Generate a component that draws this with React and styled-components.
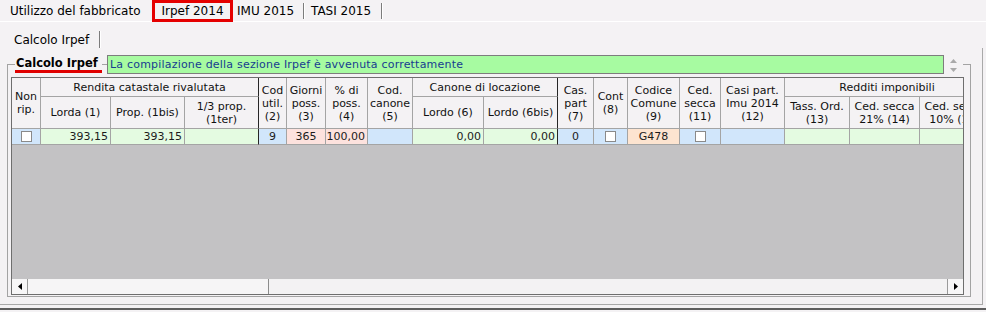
import React from 'react';
import styled, { createGlobalStyle } from 'styled-components';

const GlobalStyle = createGlobalStyle`
  html, body {
    margin: 0;
    background: #f4f2f4;
    font-family: "DejaVu Sans", Verdana, sans-serif;
  }
`;

const BLUE = '#d1e6fb';
const GREEN = '#e4fbe1';
const PINK = '#fde2de';
const PEACH = '#fde4d0';

const heads = [
  { c: '1', r: '1 / 3', t: ['Non', 'rip.'] },
  { c: '2 / 5', r: '1', t: ['Rendita catastale rivalutata'], strong: true },
  { c: '2', r: '2', t: ['Lorda (1)'] },
  { c: '3', r: '2', t: ['Prop. (1bis)'] },
  { c: '4', r: '2', t: ['1/3 prop.', '(1ter)'], strong: true },
  { c: '5', r: '1 / 3', t: ['Cod', 'util.', '(2)'] },
  { c: '6', r: '1 / 3', t: ['Giorni', 'poss.', '(3)'] },
  { c: '7', r: '1 / 3', t: ['% di', 'poss.', '(4)'] },
  { c: '8', r: '1 / 3', t: ['Cod.', 'canone', '(5)'] },
  { c: '9 / 11', r: '1', t: ['Canone di locazione'], strong: true },
  { c: '9', r: '2', t: ['Lordo (6)'] },
  { c: '10', r: '2', t: ['Lordo (6bis)'], strong: true },
  { c: '11', r: '1 / 3', t: ['Cas.', 'part', '(7)'] },
  { c: '12', r: '1 / 3', t: ['Cont', '(8)'] },
  { c: '13', r: '1 / 3', t: ['Codice', 'Comune', '(9)'] },
  { c: '14', r: '1 / 3', t: ['Ced.', 'secca', '(11)'] },
  { c: '15', r: '1 / 3', t: ['Casi part.', 'Imu 2014', '(12)'] },
  { c: '16 / 19', r: '1', t: ['Redditi imponibili'] },
  { c: '16', r: '2', t: ['Tass. Ord.', '(13)'] },
  { c: '17', r: '2', t: ['Ced. secca', '21% (14)'] },
  { c: '18', r: '2', t: ['Ced. secca', '10% (15)'] },
];

const row = [
  { bg: BLUE, chk: true },
  { bg: GREEN, v: '393,15', a: 'right' },
  { bg: GREEN, v: '393,15', a: 'right' },
  { bg: GREEN, strong: true },
  { bg: BLUE, v: '9' },
  { bg: PINK, v: '365' },
  { bg: PINK, v: '100,00', a: 'right' },
  { bg: BLUE },
  { bg: GREEN, v: '0,00', a: 'right' },
  { bg: GREEN, v: '0,00', a: 'right', strong: true },
  { bg: BLUE, v: '0' },
  { bg: BLUE, chk: true },
  { bg: PEACH, v: 'G478' },
  { bg: BLUE, chk: true },
  { bg: BLUE },
  { bg: GREEN },
  { bg: GREEN },
  { bg: GREEN },
];

function App() {
  return (
    <Page>
      <GlobalStyle />
      <TopTabs>
        <Tab $w={152} $pl={10}>Utilizzo del fabbricato</Tab>
        <ActiveTab>Irpef 2014</ActiveTab>
        <Tab $w={70} $pl={4}>IMU 2015</Tab>
        <Sep />
        <Tab $w={77} $pl={7}>TASI 2015</Tab>
        <Sep />
      </TopTabs>

      <SubTabs>
        <Tab $w={99} $pl={14}>Calcolo Irpef</Tab>
        <Sep $h={17} />
      </SubTabs>

      <Panel>
        <GroupBox>
          <LegendRow>
            <Title>Calcolo Irpef</Title>
            <Message>La compilazione della sezione Irpef è avvenuta correttamente</Message>
            <Spinner>
              <svg width="9" height="18" viewBox="0 0 9 18">
                <polygon points="1,7 4.5,3 8,7" fill="#a9a9a9" />
                <polygon points="1,12 8,12 4.5,16" fill="#a9a9a9" />
              </svg>
            </Spinner>
          </LegendRow>

          <Grid>
            <Table>
              {heads.map((h, i) => (
                <HeadCell key={i} $c={h.c} $r={h.r} $strong={h.strong}>
                  {h.t.map((line, j) => (
                    <span key={j}>{line}</span>
                  ))}
                </HeadCell>
              ))}
              {row.map((d, i) => (
                <DataCell key={'d' + i} $bg={d.bg} $align={d.a} $strong={d.strong}>
                  {d.chk ? <Check /> : d.v}
                </DataCell>
              ))}
            </Table>
            <Empty />
            <HScroll>
              <ScrollBtn $side="left">
                <svg width="4" height="7" viewBox="0 0 4 7">
                  <polygon points="4,0 4,7 0,3.5" fill="#000" />
                </svg>
              </ScrollBtn>
              <Thumb />
              <Track />
              <ScrollBtn $side="right">
                <svg width="4" height="7" viewBox="0 0 4 7">
                  <polygon points="0,0 0,7 4,3.5" fill="#000" />
                </svg>
              </ScrollBtn>
            </HScroll>
          </Grid>
        </GroupBox>
      </Panel>
      <Footer />
    </Page>
  );
}

export default App;

const Page = styled.div`
  width: 986px;
  height: 312px;
  overflow: hidden;
  background: #f4f2f4;
  color: #000;
`;

const TopTabs = styled.div`
  display: flex;
  align-items: center;
  height: 22px;
  border-bottom: 1px solid #ffffff;
  box-sizing: border-box;
  font-size: 12px;
`;

const Tab = styled.div`
  width: ${(p) => p.$w}px;
  padding-left: ${(p) => p.$pl}px;
  box-sizing: border-box;
  font-size: 12px;
  line-height: 16px;
  padding-top: 1px;
  white-space: nowrap;
`;

const ActiveTab = styled.div`
  width: 81px;
  height: 22px;
  box-sizing: border-box;
  border: 3px solid #e50000;
  display: flex;
  align-items: center;
  justify-content: center;
  font-size: 12px;
  white-space: nowrap;
  align-self: flex-start;
`;

const Sep = styled.div`
  width: 1px;
  height: ${(p) => p.$h || 16}px;
  background: #7c7c7c;
  box-shadow: 1px 0 0 #ffffff;
`;

const SubTabs = styled.div`
  display: flex;
  align-items: flex-end;
  height: 26px;
`;

const Panel = styled.div`
  width: 983px;
  height: 257px;
  box-sizing: border-box;
  border-right: 1px solid #a9a9a9;
  border-bottom: 1px solid #a9a9a9;
  padding-top: 16px;
`;

const GroupBox = styled.div`
  margin-left: 7px;
  width: 964px;
  height: 233px;
  box-sizing: border-box;
  border: 1px solid #a3a3a3;
`;

const LegendRow = styled.div`
  display: flex;
  height: 19px;
  margin: -10px 0 0 7px;
  width: 948px;
`;

const Title = styled.div`
  width: 87px;
  height: 18px;
  box-sizing: border-box;
  padding: 2px 0 0 1px;
  border-bottom: 3px solid #e00000;
  background: #f4f2f4;
  font-weight: bold;
  font-size: 11.5px;
  line-height: 13px;
  white-space: nowrap;
`;

const Message = styled.div`
  margin-left: 5px;
  width: 837px;
  height: 19px;
  box-sizing: border-box;
  border: 1px solid #7d7d7d;
  background: #a7fba1;
  color: #173c90;
  font-size: 11px;
  line-height: 17px;
  letter-spacing: 0.2px;
  padding-left: 2px;
  white-space: nowrap;
`;

const Spinner = styled.div`
  width: 19px;
  height: 19px;
  background: #f4f2f4;
  display: flex;
  align-items: center;
  padding-left: 5px;
  box-sizing: border-box;
`;

const Grid = styled.div`
  margin: 3px 0 0 3px;
  width: 953px;
  height: 218px;
  box-sizing: border-box;
  border: 1px solid #6e6e6e;
  background: #c3c2c4;
  display: flex;
  flex-direction: column;
  overflow: hidden;
`;

const Table = styled.div`
  display: grid;
  grid-template-columns: 29px 70px 74px 74px 28px 39px 42px 45px 71px 74px 36px 34px 52px 41px 64px 65px 70px 70px;
  grid-template-rows: 19px 32px 16px;
  flex-shrink: 0;
  font-size: 11px;
`;

const HeadCell = styled.div`
  grid-column: ${(p) => p.$c};
  grid-row: ${(p) => p.$r};
  box-sizing: border-box;
  border-right: 1px solid ${(p) => (p.$strong ? '#262626' : '#a4a4a4')};
  border-bottom: 1px solid #a4a4a4;
  background: #f4f2f4;
  display: flex;
  flex-direction: column;
  align-items: center;
  justify-content: center;
  line-height: 13px;
  white-space: nowrap;
  overflow: hidden;
  color: #111;
`;

const DataCell = styled.div`
  grid-row: 3;
  box-sizing: border-box;
  border-right: 1px solid ${(p) => (p.$strong ? '#262626' : '#a4a4a4')};
  border-bottom: 1px solid #a4a4a4;
  background: ${(p) => p.$bg};
  display: flex;
  align-items: center;
  justify-content: ${(p) => (p.$align === 'right' ? 'flex-end' : 'center')};
  padding-right: ${(p) => (p.$align === 'right' ? '2px' : '0')};
  line-height: 13px;
  font-weight: normal;
  color: #1c1c1c;
  white-space: nowrap;
  overflow: hidden;
`;

const Check = styled.div`
  width: 11px;
  height: 11px;
  box-sizing: border-box;
  border: 1px solid #8a8a8a;
  background: #ffffff;
`;

const Empty = styled.div`
  flex: 1;
`;

const HScroll = styled.div`
  display: flex;
  height: 15px;
  flex-shrink: 0;
  background: #f1f0f1;
`;

const ScrollBtn = styled.div`
  width: 16px;
  box-sizing: border-box;
  display: flex;
  align-items: center;
  justify-content: center;
  background: #f7f6f7;
  border-${(p) => (p.$side === 'left' ? 'right' : 'left')}: 1px solid #9a9a9a;
`;

const Thumb = styled.div`
  width: 241px;
  box-sizing: border-box;
  border-right: 1px solid #8c8c8c;
  background: #f6f5f6;
`;

const Track = styled.div`
  flex: 1;
  background-color: #f3f2f3;
  background-image: radial-gradient(#e6e5e6 0.6px, transparent 0.7px);
  background-size: 2px 2px;
`;

const Footer = styled.div`
  margin-top: 3px;
  height: 2px;
  background: #5e5e5e;
`;
